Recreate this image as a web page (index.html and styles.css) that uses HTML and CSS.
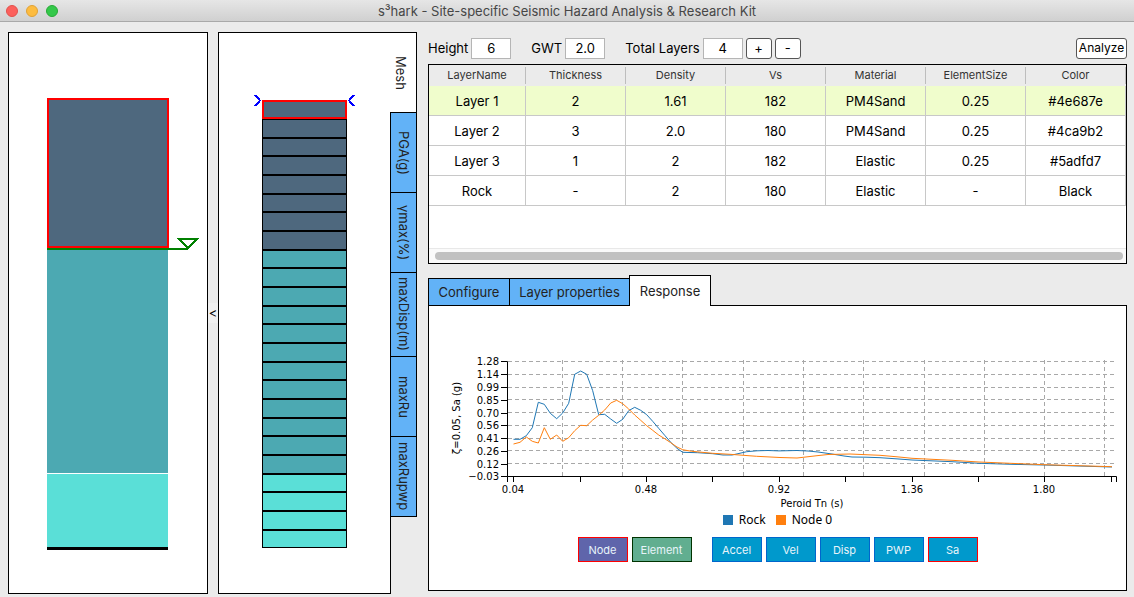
FILE: index.html
```html
<!DOCTYPE html>
<html lang="en">
<head>
<meta charset="utf-8">
<title>s³hark - Site-specific Seismic Hazard Analysis &amp; Research Kit</title>
<link rel="stylesheet" href="styles.css">
</head>
<body>
<header class="titlebar">
  <div class="lights"><span class="light close"></span><span class="light minimize"></span><span class="light zoom"></span></div>
  <h1 class="title">s³hark - Site-specific Seismic Hazard Analysis &amp; Research Kit</h1>
</header>
<main class="workspace">
  <section class="panel soil-panel" aria-label="Soil column">
    <svg class="drawing" viewBox="0 0 198 560" preserveAspectRatio="xMidYMin meet" shape-rendering="crispEdges">
      <rect x="38" y="217" width="121" height="223" fill="#4ca9b2"/>
      <rect x="38" y="441" width="121" height="73" fill="#5adfd7"/>
      <rect x="38" y="514" width="121" height="3" fill="#000"/>
      <path d="M38 216H179" stroke="green" stroke-width="2"/>
      <rect x="39" y="66" width="120" height="148" fill="#4e687e" stroke="red" stroke-width="2"/>
      <path d="M170 206H188L179 215Z" fill="none" stroke="green" stroke-width="2"/>
    </svg>
  </section>
  <div class="splitter"><button class="collapse" type="button" aria-label="Collapse soil column">&lt;</button></div>
  <section class="panel mesh-panel" aria-label="Mesh">
    <svg class="drawing" viewBox="0 0 171 560" preserveAspectRatio="xMidYMin meet" shape-rendering="crispEdges">
      <rect x="43" y="67" width="85" height="150" fill="#4e687e"/>
      <rect x="43" y="217" width="85" height="224" fill="#4ca9b2"/>
      <rect x="43" y="441" width="85" height="74" fill="#5adfd7"/>
      <path d="M43 86h85M43 105h85M43 123h85M43 142h85M43 161h85M43 179h85M43 198h85M43 217h85M43 235h85M43 254h85M43 273h85M43 291h85M43 310h85M43 329h85M43 347h85M43 366h85M43 385h85M43 403h85M43 422h85M43 441h85M43 459h85M43 478h85M43 497h85" stroke="#000" stroke-width="2"/>
      <rect x="43.500" y="67.500" width="84" height="447" fill="none" stroke="#000"/>
      <rect x="44" y="68" width="83" height="17" fill="none" stroke="red" stroke-width="2"/>
      <path d="M36 62L41 67.500L36 73M135 62L130 67.500L135 73" fill="none" stroke="#00f" stroke-width="2"/>
    </svg>
  </section>
  <nav class="side-tabs" aria-label="Profiles">
    <button class="side-tab active" type="button">Mesh</button>
    <button class="side-tab" type="button">PGA(g)</button>
    <button class="side-tab" type="button">γmax(%)</button>
    <button class="side-tab long" type="button">maxDisp(m)</button>
    <button class="side-tab" type="button">maxRu</button>
    <button class="side-tab" type="button">maxRupwp</button>
  </nav>
  <section class="details">
    <form class="toolbar">
      <div class="field"><label for="height">Height</label><input id="height" type="text" value="6"></div>
      <div class="field"><label for="gwt">GWT</label><input id="gwt" type="text" value="2.0"></div>
      <div class="field"><label for="layers">Total Layers</label><input id="layers" type="text" value="4"></div>
      <div class="steppers"><button class="tool" type="button">+</button><button class="tool" type="button">-</button></div>
      <button class="tool analyze" type="button">Analyze</button>
    </form>
    <div class="table-box">
      <table class="layers">
        <thead>
          <tr><th class="name"><span>LayerName</span></th><th><span>Thickness</span></th><th><span>Density</span></th><th><span>Vs</span></th><th><span>Material</span></th><th><span>ElementSize</span></th><th><span>Color</span></th></tr>
        </thead>
        <tbody>
          <tr class="selected"><td>Layer 1</td><td>2</td><td>1.61</td><td>182</td><td>PM4Sand</td><td>0.25</td><td>#4e687e</td></tr>
          <tr><td>Layer 2</td><td>3</td><td>2.0</td><td>180</td><td>PM4Sand</td><td>0.25</td><td>#4ca9b2</td></tr>
          <tr><td>Layer 3</td><td>1</td><td>2</td><td>182</td><td>Elastic</td><td>0.25</td><td>#5adfd7</td></tr>
          <tr><td>Rock</td><td>-</td><td>2</td><td>180</td><td>Elastic</td><td>-</td><td>Black</td></tr>
        </tbody>
      </table>
      <div class="scrollbar"><div class="thumb"></div></div>
    </div>
    <nav class="tabs" aria-label="Views">
      <button class="tab" type="button">Configure</button>
      <button class="tab wide" type="button">Layer properties</button>
      <button class="tab active" type="button">Response</button>
    </nav>
    <div class="response">
      <svg class="chart" viewBox="429 346 697 164" role="img" aria-label="Response spectrum">
        <path class="grid" d="M508 361.500H1116M508 374.500H1116M508 387.500H1116M508 399.500H1116M508 412.500H1116M508 425.500H1116M508 438.500H1116M508 450.500H1116M508 463.500H1116M562.500 476V360M622.500 476V360M682.500 476V360M743.500 476V360M803.500 476V360M863.500 476V360M924.500 476V360M984.500 476V360M1044.500 476V360M1104.500 476V360"/>
        <path class="axis" d="M501 361.500H507.500V476.500H501M501 374.500H507M501 387.500H507M501 400.500H507M501 413.500H507M501 425.500H507M501 438.500H507M501 451.500H507M501 464.500H507M507.500 482V476.500H1116.500V482M513.500 476V482M580.500 476V482M646.500 476V482M712.500 476V482M779.500 476V482M845.500 476V482M912.500 476V482M978.500 476V482M1044.500 476V482M1111.500 476V482"/>
        <polyline class="series rock" points="513.5,439.3 520,439.3 526.3,435.7 532.3,427.7 538.3,402.3 544.3,404.3 550.3,413.3 556.7,418.7 562.7,413 568.7,403.3 574.7,374.3 580.7,371 586.7,374.3 592.7,390.7 598.7,414.7 604.7,414.3 610.7,419 616.7,423.3 622.7,419.3 628.7,410.7 634.7,407.3 640.7,410.3 646.7,414.7 652.7,421.3 658.7,428.3 664.7,435.3 670.7,442.3 677,448.3 682.7,452.3 697.7,452.7 712.7,453.7 723,455 732,455 738,453.7 746.7,451.7 757,450.8 768,450.5 779,450.9 797,450.5 808,451 818,452 832,454 844,456 852,457 866,457.2 880,457.7 896,458.8 912,460 952,461.7 979,463.3 1011,464.3 1044,465 1112,467"/>
        <polyline class="series node" points="513.5,444 520,442.3 526.3,437 532.3,441.3 538.3,443 544.3,427.7 550.3,439.3 556.7,435 562.7,441.3 568.7,437.7 574.7,430.7 580.7,425.3 586.7,425.7 592.7,420 598.7,415.3 604.7,410 610.7,403 616.7,400.3 622.7,403.7 628.7,409 634.7,415 640.7,420.3 646.7,425.7 652.7,430.3 658.7,435 664.7,438.7 670.7,442.7 677,447 682.7,449.7 691.7,451.3 712.7,453.3 730,454.3 756.7,456.3 780,457.5 797,458 817,455.7 828,454.5 850,454 868,454.8 880,455.3 897,456.8 912,458.3 952,460.3 979,462 1044,464.7 1112,466.7"/>
        <g class="labels y-labels">
          <text x="499" y="365">1.28</text><text x="499" y="378">1.14</text><text x="499" y="391">0.99</text><text x="499" y="404">0.85</text><text x="499" y="417">0.70</text><text x="499" y="429">0.56</text><text x="499" y="442">0.41</text><text x="499" y="455">0.26</text><text x="499" y="468">0.12</text><text x="499" y="480">−0.03</text>
        </g>
        <g class="labels x-labels">
          <text x="513" y="493">0.04</text><text x="646" y="493">0.48</text><text x="779" y="493">0.92</text><text x="912" y="493">1.36</text><text x="1044" y="493">1.80</text>
          <text x="812" y="507">Peroid Tn (s)</text>
          <text transform="translate(460 418) rotate(-90)">ζ=0.05, Sa (g)</text>
        </g>
      </svg>
      <div class="legend">
        <span class="key"><i class="swatch rock-swatch"></i>Rock</span>
        <span class="key"><i class="swatch node-swatch"></i>Node 0</span>
      </div>
      <div class="actions">
        <div class="group">
          <button class="action node-btn chosen" type="button">Node</button>
          <button class="action element-btn" type="button">Element</button>
        </div>
        <div class="group">
          <button class="action" type="button">Accel</button>
          <button class="action" type="button">Vel</button>
          <button class="action" type="button">Disp</button>
          <button class="action" type="button">PWP</button>
          <button class="action chosen" type="button">Sa</button>
        </div>
      </div>
    </div>
  </section>
</main>
</body>
</html>
```

FILE: styles.css
```css
* { box-sizing: border-box; }

body {
  margin: 0;
  min-height: 100vh;
  display: flex;
  flex-direction: column;
  background: #ebebeb;
  color: #000;
  font: 13px/16px Inter, "Liberation Sans", sans-serif;
}

button, input { font: inherit; color: inherit; margin: 0; }

.titlebar {
  display: grid;
  grid-template-columns: 60px 1fr 60px;
  align-items: center;
  height: 22px;
  background: linear-gradient(#e6e6e6, #d0d0d0);
  border-bottom: 1px solid #a9a9a9;
}
.lights { display: flex; gap: 8px; padding-left: 6px; }
.light { width: 12px; height: 12px; border-radius: 50%; border: 1px solid; }
.close { background: #fc605c; border-color: #e2514c; }
.minimize { background: #fdbc40; border-color: #e0a236; }
.zoom { background: #34c84a; border-color: #27aa35; }
.title { margin: 0; font-size: 13px; font-weight: 400; text-align: center; color: #464646; }

.workspace { flex: 1; display: flex; padding: 10px 7px 3px 8px; }
.panel { flex: none; background: #fff; border: 1px solid #000; }
.soil-panel { width: 200px; }
.mesh-panel { width: 173px; }
.drawing { display: block; width: 100%; }

.splitter { flex: none; width: 10px; display: flex; align-items: center; }
.collapse { width: 10px; height: 20px; padding: 0; border: 0; background: #f0f0f0; }

.side-tabs { flex: none; display: flex; flex-direction: column; margin-left: -1px; width: 27px; z-index: 1; }
.side-tab {
  height: 81px;
  margin-bottom: -1px;
  padding: 0;
  writing-mode: vertical-rl;
  text-align: center;
  background: #62b2f7;
  border: 1px solid #000;
  color: #222;
}
.side-tab.long { height: 85px; }
.side-tab.active { background: #fff; border-left: 0; border-bottom: 0; padding-right: 4px; }

.details { flex: 1; min-width: 0; display: flex; flex-direction: column; margin-left: 11px; }
.toolbar { display: flex; align-items: center; height: 32px; }
.field { display: flex; align-items: center; gap: 3px; margin-right: 20px; }
.field:nth-child(3) { margin-right: 3px; }
.field input { width: 40px; height: 21px; padding: 0; border: 1px solid #b5b5b5; background: #fff; text-align: center; }
.steppers { display: flex; gap: 3px; }
.tool { width: 26px; height: 21px; padding: 0; border: 1px solid #555; border-radius: 3px; background: #fff; }
.analyze { width: 51px; margin-left: auto; font-size: 12px; }

.table-box { display: flex; flex-direction: column; justify-content: space-between; height: 200px; background: #fff; border: 1px solid #000; }
.layers { width: 100%; table-layout: fixed; border-collapse: separate; border-spacing: 0; text-align: center; }
.layers th { height: 21px; padding: 2px 0; background: #ebebeb; font-size: 11px; font-weight: 400; color: #333; }
.layers .name { width: 97px; }
.layers th span { display: block; line-height: 17px; border-right: 1px solid #bdbdbd; }
.layers td { height: 30px; padding: 0; border-right: 1px solid #c8c8c8; border-bottom: 1px solid #c8c8c8; }
.selected td { background: #f0fdcc; }
.scrollbar { height: 15px; padding: 3px 3px 3px 6px; border-top: 1px solid #e8e8e8; background: #fafafa; }
.thumb { height: 8px; border-radius: 4px; background: #c1c1c1; }

.tabs { display: flex; align-items: flex-end; margin-top: 11px; z-index: 1; }
.tab { width: 82px; height: 28px; padding: 0; margin-right: -1px; border: 1px solid #000; background: #62b2f7; color: #222; white-space: nowrap; }
.tab.wide { width: 121px; }
.tab.active { height: 31px; background: #fff; border-bottom: 0; }

.response { flex: 1; margin-top: -1px; padding-top: 40px; background: #fff; border: 1px solid #000; margin-bottom: 3px; }
.chart { display: block; width: 100%; font-family: "DejaVu Sans", sans-serif; font-size: 10px; }
.grid { fill: none; stroke: #a8a8a8; stroke-dasharray: 4 3; }
.axis { fill: none; stroke: #000; }
.series { fill: none; stroke-width: 1; }
.rock { stroke: #1f77b4; }
.node { stroke: #ff7f0e; }
.y-labels { text-anchor: end; }
.x-labels { text-anchor: middle; }

.legend { display: flex; justify-content: center; gap: 10px; padding-top: 2px; font-family: "Noto Sans", sans-serif; font-size: 12px; }
.key { display: flex; align-items: center; gap: 6px; }
.swatch { width: 10px; height: 10px; }
.rock-swatch { background: #1f77b4; }
.node-swatch { background: #ff7f0e; }

.actions { display: flex; justify-content: center; gap: 20px; margin-top: 9px; }
.group { display: flex; gap: 4px; }
.action { width: 50px; height: 25px; padding: 0; border: 1px solid #0066cc; background: #0099cc; color: #e8f4fa; font-size: 11px; }
.node-btn { background: #5f65ab; }
.element-btn { width: 60px; background: #61ae90; border-color: #003300; }
.chosen { border-color: #f00; }
```
